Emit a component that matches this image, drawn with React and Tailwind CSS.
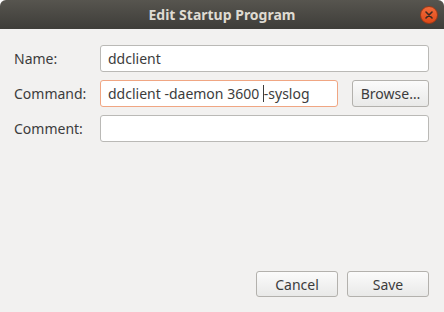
export default function App() {
  const font = { fontFamily: '"Noto Sans", "Open Sans", sans-serif' };
  return (
    <div className="w-[444px] h-[312px] bg-white" style={font}>
      <div className="w-[444px] h-[312px] flex flex-col bg-[#f2f1f0] rounded-t-[6px] overflow-hidden">
        <div className="h-[29px] shrink-0 relative flex items-center justify-center bg-gradient-to-b from-[#57554f] to-[#3e3d39]">
          <span className="text-[14px] font-bold text-[#dfdbd2]">Edit Startup Program</span>
          <div className="absolute right-[6px] top-[6px] w-[18px] h-[18px] rounded-full bg-gradient-to-b from-[#f26b3a] to-[#de4815] border border-[#9c3a18] flex items-center justify-center">
            <svg width="8" height="8" viewBox="0 0 8 8">
              <path d="M1 1 L7 7 M7 1 L1 7" stroke="#3c2a22" strokeWidth="1.6" strokeLinecap="round" />
            </svg>
          </div>
        </div>
        <div className="flex-1 flex flex-col pl-[14px] pr-[15px] pt-[16px] pb-[15px] text-[14px] text-[#3c3c3c]">
          <div className="flex flex-col gap-[8px]">
            <div className="flex items-center h-[27px]">
              <div className="w-[86px]">Name:</div>
              <div className="flex-1 h-[27px] rounded-[3px] border border-[#bab9b6] bg-white flex items-center px-[7px]">ddclient</div>
            </div>
            <div className="flex items-center h-[27px]">
              <div className="w-[86px]">Command:</div>
              <div className="w-[238px] h-[27px] rounded-[3px] border border-[#f0a683] bg-white flex items-center px-[7px] whitespace-pre">
                <span>ddclient -daemon 3600 </span>
                <span className="inline-block w-px h-[17px] bg-[#3c3c3c]"></span>
                <span>-syslog</span>
              </div>
              <div className="ml-[14px] flex-1 h-[27px] rounded-[3px] border border-[#b3b1ad] bg-gradient-to-b from-[#fbfbfb] to-[#e9e9e8] flex items-center justify-center">Browse…</div>
            </div>
            <div className="flex items-center h-[27px]">
              <div className="w-[86px]">Comment:</div>
              <div className="flex-1 h-[27px] rounded-[3px] border border-[#bab9b6] bg-white"></div>
            </div>
          </div>
          <div className="flex-1"></div>
          <div className="flex justify-end gap-[9px]">
            <div className="w-[82px] h-[26px] rounded-[3px] border border-[#b3b1ad] bg-gradient-to-b from-[#fbfbfb] to-[#e9e9e8] flex items-center justify-center">Cancel</div>
            <div className="w-[82px] h-[26px] rounded-[3px] border border-[#b3b1ad] bg-gradient-to-b from-[#fbfbfb] to-[#e9e9e8] flex items-center justify-center">Save</div>
          </div>
        </div>
      </div>
    </div>
  );
}
